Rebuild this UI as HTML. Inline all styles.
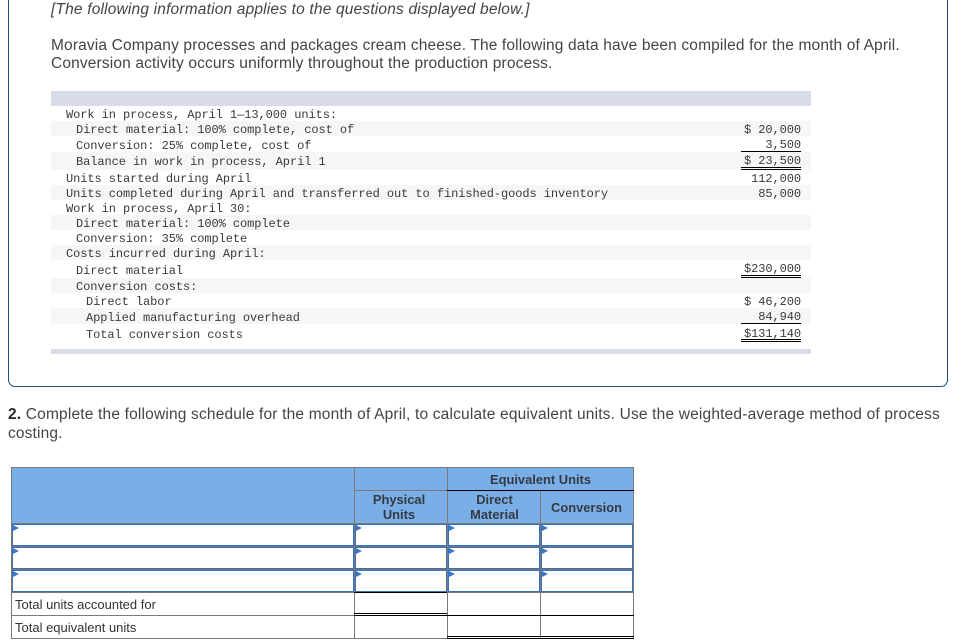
<!DOCTYPE html>
<html><head><meta charset="utf-8">
<style>
html,body{margin:0;padding:0;background:#fff}
body{width:963px;height:641px;position:relative;overflow:hidden;font-family:"Liberation Sans",sans-serif;color:#3a3a3a}
.a{position:absolute}
.t{position:absolute;white-space:nowrap;font-size:15.5px;line-height:15px;color:#444;letter-spacing:.147px}
.m{position:absolute;white-space:nowrap;font-family:"Liberation Mono",monospace;font-size:12px;letter-spacing:-.07px;line-height:14px;color:#3a3a3a}
.r{text-align:right;left:641px;width:160px}
.g{position:absolute;left:51px;width:760px;background:#f6f6f6}
.b{position:absolute;background:#d8dce8;left:51px;width:760px}
.k{position:absolute;background:#000;height:1px;left:741px;width:60px}
.h{position:absolute;background:#7aaee6}
.l{position:absolute;background:#7a7a7a}
.x{position:absolute;background:#000}
.i{position:absolute;box-sizing:border-box;border:1px solid #3c70b4;background:#fff}
.i:before{content:"";position:absolute;left:0;top:0;border-left:6px solid #3c78c8;border-top:3px solid transparent;border-bottom:3px solid transparent}
.c{position:absolute;font-size:12.9px;line-height:15px;color:#333a44;text-align:center;white-space:nowrap;font-weight:bold}
.d{font-size:13px;line-height:15px;color:#333;position:absolute;white-space:nowrap;left:15px}
</style></head><body>
<div class="a" style="left:8px;top:-20px;width:938px;height:405px;border:1.5px solid #1f4f82;border-radius:7px;box-sizing:content-box"></div>
<div class="t" style="left:51px;top:2px;font-style:italic;letter-spacing:.18px">[The following information applies to the questions displayed below.]</div>
<div class="t" style="left:51px;top:38px">Moravia Company processes and packages cream cheese. The following data have been compiled for the month of April.</div>
<div class="t" style="left:51px;top:56px">Conversion activity occurs uniformly throughout the production process.</div>

<div class="b" style="top:91px;height:15px"></div>
<div class="g" style="top:121px;height:15px"></div>
<div class="g" style="top:152px;height:18px"></div>
<div class="g" style="top:185px;height:15px"></div>
<div class="g" style="top:215px;height:15px"></div>
<div class="g" style="top:245px;height:15px"></div>
<div class="g" style="top:278px;height:15px"></div>
<div class="g" style="top:308px;height:16px"></div>
<div class="b" style="top:349px;height:5px"></div>

<div class="m" style="left:66px;top:108px">Work in process, April 1—13,000 units:</div>
<div class="m" style="left:76px;top:123px">Direct material: 100% complete, cost of</div>
<div class="m" style="left:76px;top:139px">Conversion: 25% complete, cost of</div>
<div class="m" style="left:76px;top:155px">Balance in work in process, April 1</div>
<div class="m" style="left:66px;top:172px">Units started during April</div>
<div class="m" style="left:66px;top:187px">Units completed during April and transferred out to finished-goods inventory</div>
<div class="m" style="left:66px;top:202px">Work in process, April 30:</div>
<div class="m" style="left:76px;top:217px">Direct material: 100% complete</div>
<div class="m" style="left:76px;top:232px">Conversion: 35% complete</div>
<div class="m" style="left:66px;top:247px">Costs incurred during April:</div>
<div class="m" style="left:76px;top:264px">Direct material</div>
<div class="m" style="left:76px;top:280px">Conversion costs:</div>
<div class="m" style="left:86px;top:295px">Direct labor</div>
<div class="m" style="left:86px;top:311px">Applied manufacturing overhead</div>
<div class="m" style="left:86px;top:328px">Total conversion costs</div>

<div class="m r" style="top:123px">$ 20,000</div>
<div class="m r" style="top:138px">3,500</div>
<div class="m r" style="top:154px">$ 23,500</div>
<div class="m r" style="top:172px">112,000</div>
<div class="m r" style="top:187px">85,000</div>
<div class="m r" style="top:262px">$230,000</div>
<div class="m r" style="top:295px">$ 46,200</div>
<div class="m r" style="top:310px">84,940</div>
<div class="m r" style="top:327px">$131,140</div>
<div class="k" style="top:151px"></div>
<div class="k" style="top:167px"></div>
<div class="k" style="top:169px"></div>
<div class="k" style="top:275px"></div>
<div class="k" style="top:277px"></div>
<div class="k" style="top:323px"></div>
<div class="k" style="top:339px"></div>
<div class="k" style="top:341px"></div>

<div class="t" style="left:8px;top:407px;letter-spacing:.18px"><b style="color:#2a2a2a">2.</b> Complete the following schedule for the month of April, to calculate equivalent units. Use the weighted-average method of process</div>
<div class="t" style="left:8px;top:426px">costing.</div>

<div class="h" style="left:11px;top:467px;width:622px;height:56px"></div>
<div class="l" style="left:11px;top:523px;width:623px;height:70px"></div>
<div class="l" style="left:11px;top:467px;width:623px;height:1px"></div>
<div class="l" style="left:11px;top:467px;width:1px;height:172px"></div>
<div class="l" style="left:354px;top:467px;width:1px;height:172px"></div>
<div class="l" style="left:447px;top:467px;width:1px;height:172px"></div>
<div class="l" style="left:540px;top:490px;width:1px;height:149px"></div>
<div class="l" style="left:633px;top:467px;width:1px;height:172px"></div>
<div class="x" style="left:447px;top:490px;width:187px;height:1px"></div>
<div class="l" style="left:354px;top:490px;width:93px;height:1px"></div>

<div class="c" style="left:447px;width:187px;top:472px">Equivalent Units</div>
<div class="c" style="left:352px;width:94px;top:492px">Physical<br>Units</div>
<div class="c" style="left:448px;width:93px;top:492px">Direct<br>Material</div>
<div class="c" style="left:540px;width:93px;top:500px">Conversion</div>

<div class="i" style="left:12px;top:524px;width:342px;height:22px"></div>
<div class="i" style="left:355px;top:524px;width:92px;height:22px"></div>
<div class="i" style="left:448px;top:524px;width:92px;height:22px"></div>
<div class="i" style="left:541px;top:524px;width:92px;height:22px"></div>
<div class="i" style="left:12px;top:547px;width:342px;height:22px"></div>
<div class="i" style="left:355px;top:547px;width:92px;height:22px"></div>
<div class="i" style="left:448px;top:547px;width:92px;height:22px"></div>
<div class="i" style="left:541px;top:547px;width:92px;height:22px"></div>
<div class="i" style="left:12px;top:570px;width:342px;height:22px"></div>
<div class="i" style="left:355px;top:570px;width:92px;height:22px"></div>
<div class="i" style="left:448px;top:570px;width:92px;height:22px"></div>
<div class="i" style="left:541px;top:570px;width:92px;height:22px"></div>

<div class="l" style="left:11px;top:592px;width:623px;height:1px"></div>
<div class="l" style="left:11px;top:615px;width:623px;height:1px"></div>
<div class="l" style="left:11px;top:638px;width:623px;height:1px"></div>
<div class="x" style="left:354px;top:592px;width:93px;height:1px"></div>
<div class="x" style="left:354px;top:613px;width:93px;height:1px"></div>
<div class="x" style="left:354px;top:615px;width:93px;height:1px"></div>
<div class="x" style="left:447px;top:615px;width:187px;height:1px"></div>
<div class="x" style="left:447px;top:636px;width:187px;height:1px"></div>
<div class="x" style="left:447px;top:638px;width:187px;height:1px"></div>

<div class="d" style="top:597px">Total units accounted for</div>
<div class="d" style="top:620px">Total equivalent units</div>
</body></html>
